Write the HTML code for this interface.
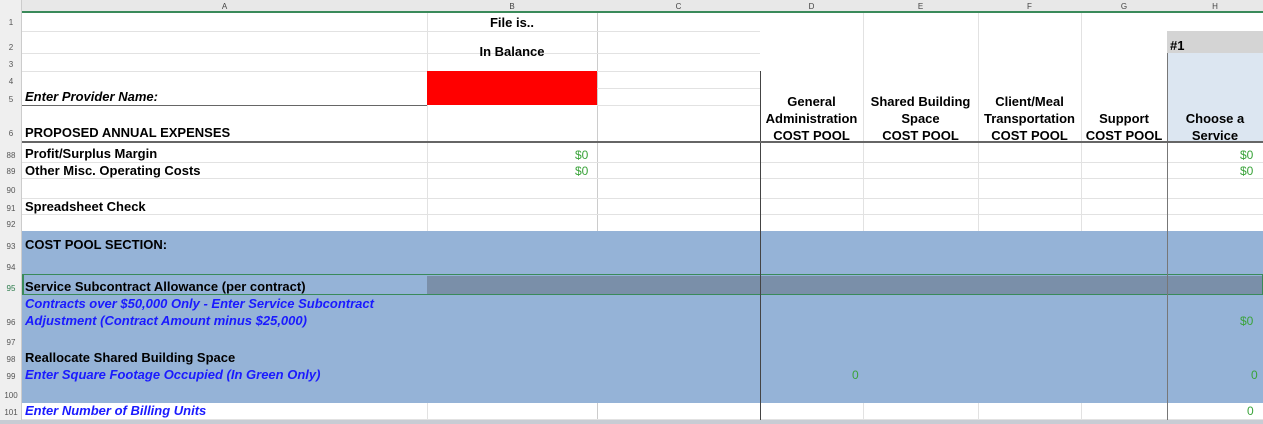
<!DOCTYPE html>
<html><head><style>
body{margin:0;width:1263px;height:424px;overflow:hidden;background:#fff;font-family:"Liberation Sans",Arial,sans-serif;position:relative}
div{position:absolute;box-sizing:border-box}
.t{font-weight:bold;font-size:13px;color:#000;white-space:nowrap}
.bl{color:#1a1aff;font-style:italic;font-weight:bold;font-size:13px;white-space:nowrap}
.rn{font-size:8px;color:#555;left:0;width:22px;text-align:center}
.g{color:#3aa33a;font-size:12px}
.hl{height:1px;background:#e2e2e2;left:22px;width:1241px}
.vl{width:1px;background:#e2e2e2;top:13px;height:407px}
.ch{font-size:8px;color:#444;top:2px;text-align:center}
.c{text-align:center;font-weight:bold;font-size:13px;line-height:17px}
</style></head><body>
<!-- light grid -->
<div class="vl" style="left:427px"></div>
<div class="vl" style="left:597px;background:#ccc"></div>
<div class="vl" style="left:863px"></div>
<div class="vl" style="left:978px"></div>
<div class="vl" style="left:1081px"></div>
<div class="hl" style="top:31px;width:738px"></div><div class="hl" style="top:53px;width:738px"></div><div class="hl" style="top:71px;width:738px"></div>
<div class="hl" style="top:88px;left:597px;width:163px"></div>
<div class="hl" style="top:105px;left:597px;width:163px"></div>
<div class="hl" style="top:162px"></div><div class="hl" style="top:178px"></div><div class="hl" style="top:198px"></div><div class="hl" style="top:214px"></div>
<div class="hl" style="top:419px"></div>
<!-- header bars -->
<div style="left:0;top:0;width:1263px;height:13px;background:#e8e8e8;border-bottom:2px solid #3a8a5a"></div>
<div style="left:0;top:0;width:22px;height:424px;background:#efefef;border-right:1px solid #ccc"></div>
<div style="left:0;top:420px;width:1263px;height:4px;background:#c8ccd4"></div>
<!-- fills -->
<div style="left:1167px;top:31px;width:96px;height:22px;background:#d4d4d4"></div>
<div style="left:1167px;top:53px;width:96px;height:89px;background:#dce6f1"></div>
<div style="left:427px;top:71px;width:170px;height:34px;background:#ff0000"></div>
<div style="left:22px;top:231px;width:1241px;height:172px;background:#95b3d7"></div>
<div style="left:427px;top:276px;width:836px;height:18px;background:#7a8fa9"></div>
<div style="left:22px;top:274px;width:1241px;height:21px;border:1px solid #3a8a5a;border-left:2px solid #3a8a5a"></div>
<!-- dark lines -->
<div class="vl" style="left:760px;top:71px;height:349px;background:#444"></div>
<div class="vl" style="left:1167px;top:53px;height:367px;background:#777"></div>
<div class="hl" style="top:105px;width:405px;background:#666"></div>
<div class="hl" style="top:141px;height:2px;background:#666"></div>
<!-- col headers -->
<div class="ch" style="left:22px;width:405px">A</div>
<div class="ch" style="left:427px;width:170px">B</div>
<div class="ch" style="left:597px;width:163px">C</div>
<div class="ch" style="left:760px;width:103px">D</div>
<div class="ch" style="left:863px;width:115px">E</div>
<div class="ch" style="left:978px;width:103px">F</div>
<div class="ch" style="left:1081px;width:86px">G</div>
<div class="ch" style="left:1167px;width:96px">H</div>
<!-- row numbers -->
<div class="rn" style="top:18px">1</div><div class="rn" style="top:43px">2</div><div class="rn" style="top:60px">3</div>
<div class="rn" style="top:77px">4</div><div class="rn" style="top:95px">5</div><div class="rn" style="top:129px">6</div>
<div class="rn" style="top:151px">88</div><div class="rn" style="top:167px">89</div><div class="rn" style="top:186px">90</div>
<div class="rn" style="top:204px">91</div><div class="rn" style="top:220px">92</div><div class="rn" style="top:242px">93</div>
<div class="rn" style="top:263px">94</div><div class="rn" style="top:284px;color:#2a7a4a">95</div><div class="rn" style="top:318px">96</div>
<div class="rn" style="top:338px">97</div><div class="rn" style="top:355px">98</div><div class="rn" style="top:372px">99</div>
<div class="rn" style="top:391px">100</div><div class="rn" style="top:408px">101</div>
<!-- text -->
<div class="t" style="left:427px;width:170px;text-align:center;top:15px">File is..</div>
<div class="t" style="left:427px;width:170px;text-align:center;top:44px">In Balance</div>
<div class="t" style="left:1170px;top:38px">#1</div>
<div class="bl" style="left:25px;top:89px;color:#000">Enter Provider Name:</div>
<div class="t" style="left:25px;top:125px">PROPOSED ANNUAL EXPENSES</div>
<div class="c" style="left:760px;width:103px;top:93px">General<br>Administration<br>COST POOL</div>
<div class="c" style="left:863px;width:115px;top:93px">Shared Building<br>Space<br>COST POOL</div>
<div class="c" style="left:978px;width:103px;top:93px">Client/Meal<br>Transportation<br>COST POOL</div>
<div class="c" style="left:1081px;width:86px;top:110px">Support<br>COST POOL</div>
<div class="c" style="left:1167px;width:96px;top:110px">Choose a<br>Service</div>
<div class="t" style="left:25px;top:146px">Profit/Surplus Margin</div>
<div class="t" style="left:25px;top:163px">Other Misc. Operating Costs</div>
<div class="t" style="left:25px;top:199px">Spreadsheet Check</div>
<div class="t" style="left:25px;top:237px">COST POOL SECTION:</div>
<div class="t" style="left:25px;top:279px">Service Subcontract Allowance (per contract)</div>
<div class="bl" style="left:25px;top:296px">Contracts over $50,000 Only - Enter Service Subcontract</div>
<div class="bl" style="left:25px;top:313px">Adjustment (Contract Amount minus $25,000)</div>
<div class="t" style="left:25px;top:350px">Reallocate Shared Building Space</div>
<div class="bl" style="left:25px;top:367px">Enter Square Footage Occupied (In Green Only)</div>
<div class="bl" style="left:25px;top:403px">Enter Number of Billing Units</div>
<div class="g" style="left:575px;top:148px">$0</div><div class="g" style="left:575px;top:164px">$0</div>
<div class="g" style="left:1240px;top:148px">$0</div><div class="g" style="left:1240px;top:164px">$0</div>
<div class="g" style="left:1240px;top:314px">$0</div>
<div class="g" style="left:852px;top:368px">0</div>
<div class="g" style="left:1251px;top:368px">0</div>
<div class="g" style="left:1247px;top:404px">0</div>
</body></html>
